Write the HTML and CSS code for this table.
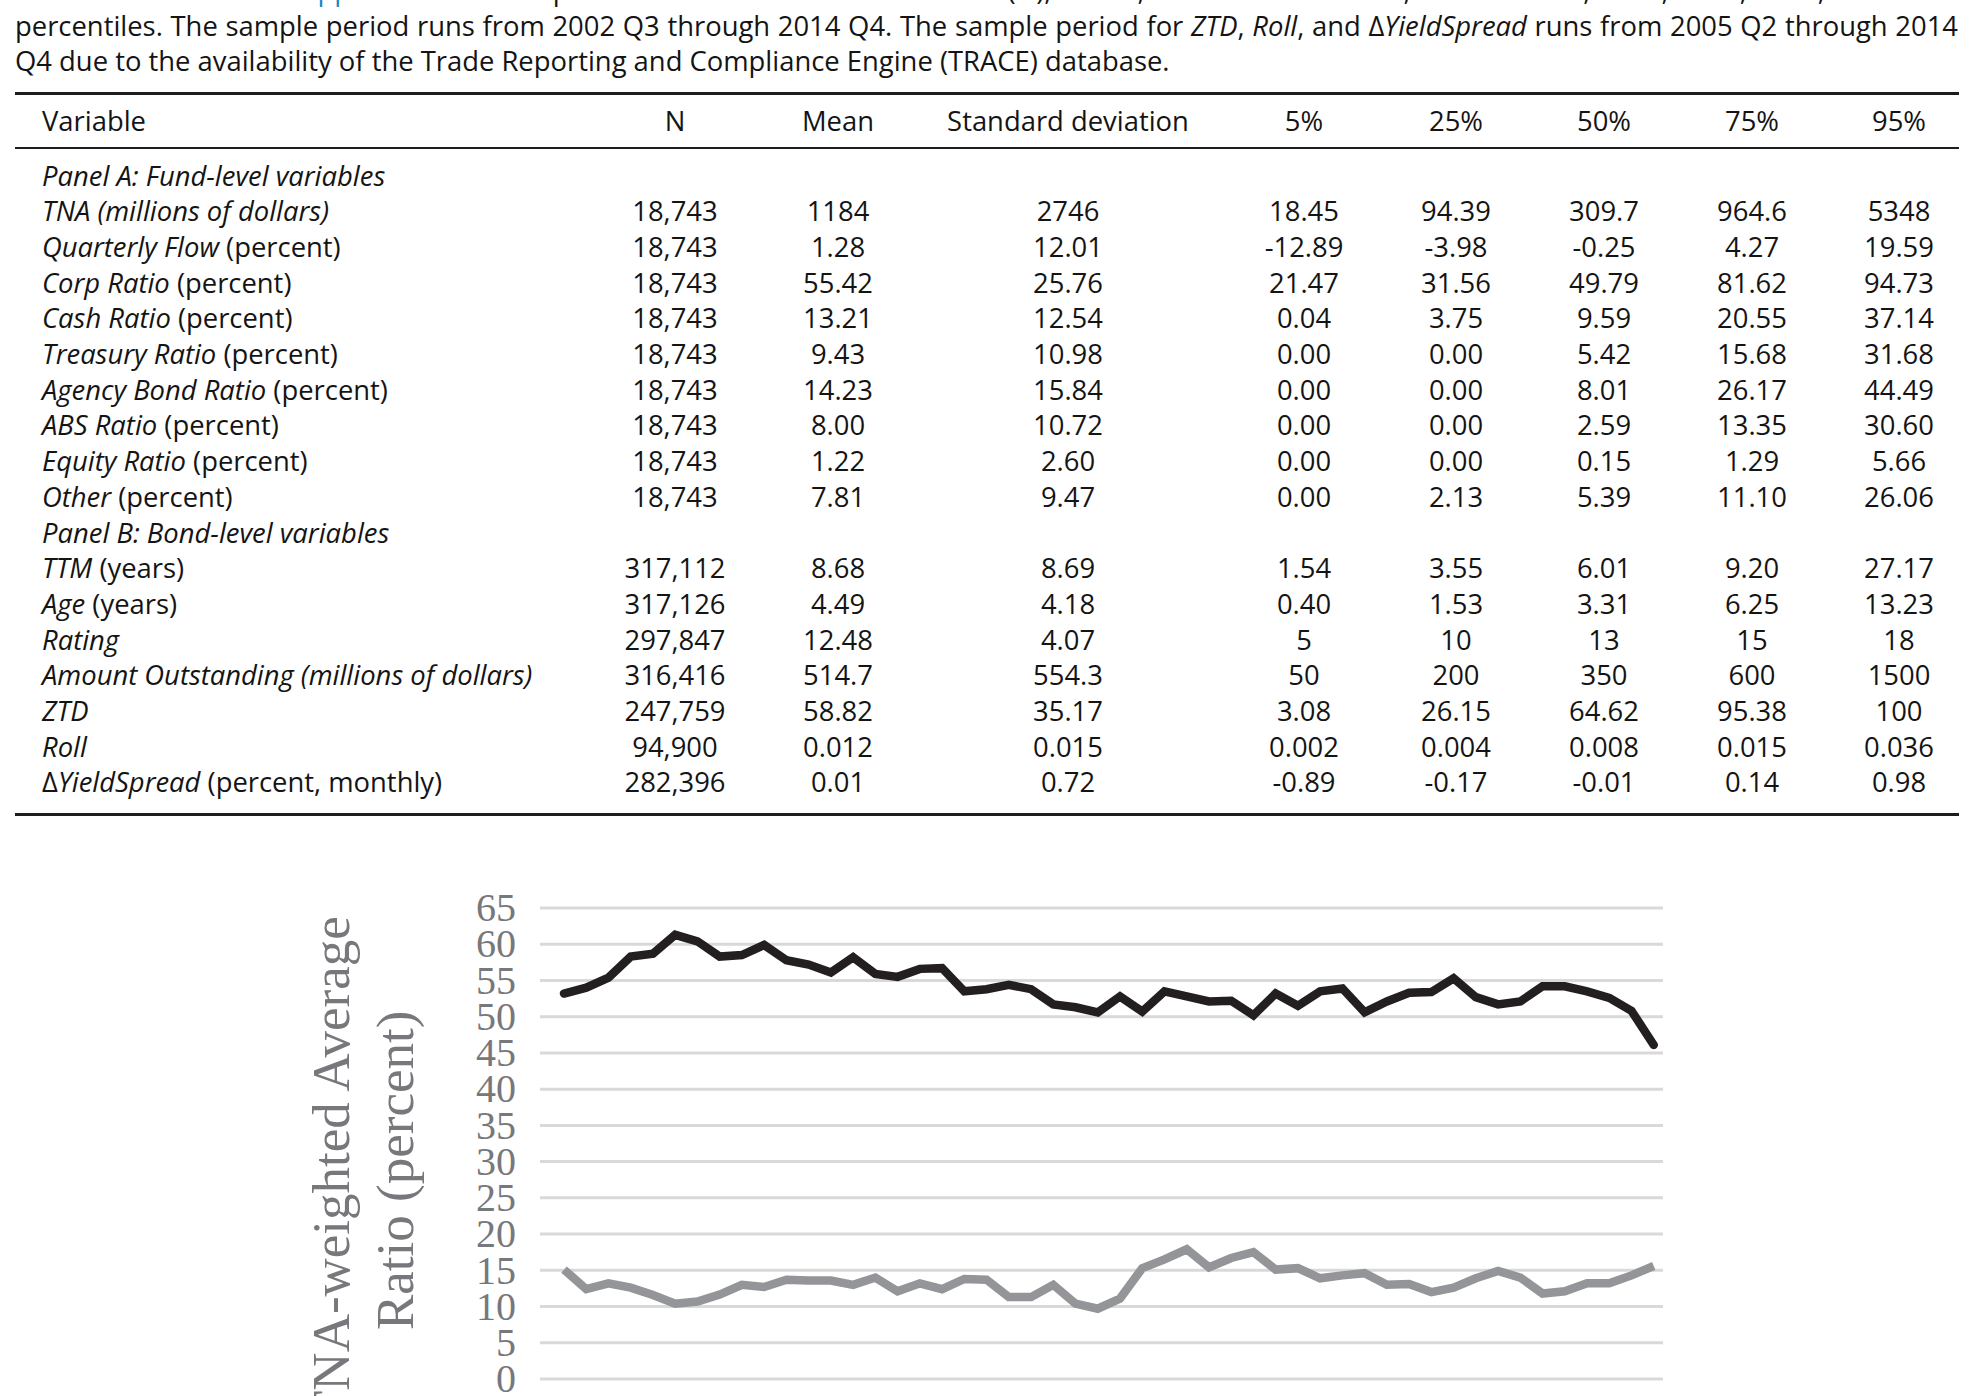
FILE: index.html
```html
<!DOCTYPE html>
<html lang="en">
<head>
    <meta charset="UTF-8">
    <title>Summary statistics</title>
    <link rel="stylesheet" href="styles.css">
</head>
<body>
    <div class="note">
        <div class="line full">variables. Defined in <a href="#">Appendix A</a>. We report the number of observations (N), mean, standard deviation, and the 5th, 25th, 50th, 75th, and 95th</div>
        <div class="line full">percentiles. The sample period runs from 2002 Q3 through 2014 Q4. The sample period for <i>ZTD</i>, <i>Roll</i>, and Δ<i>YieldSpread</i> runs from 2005 Q2 through 2014</div>
        <div class="line">Q4 due to the availability of the Trade Reporting and Compliance Engine (TRACE) database.</div>
    </div>

    <table class="stats">
        <colgroup>
            <col class="c-var">
            <col class="c-n">
            <col class="c-mean">
            <col class="c-sd">
            <col class="c-p5">
            <col class="c-p25">
            <col class="c-p50">
            <col class="c-p75">
            <col class="c-p95">
        </colgroup>
        <thead>
            <tr>
                <th class="label">Variable</th>
                <th>N</th>
                <th>Mean</th>
                <th>Standard deviation</th>
                <th>5%</th>
                <th>25%</th>
                <th>50%</th>
                <th>75%</th>
                <th>95%</th>
            </tr>
        </thead>
        <tbody>
            <tr class="panel"><td class="label"><i>Panel A: Fund-level variables</i></td><td colspan="8"></td></tr>
            <tr><td class="label"><i>TNA (millions of dollars)</i></td><td>18,743</td><td>1184</td><td>2746</td><td>18.45</td><td>94.39</td><td>309.7</td><td>964.6</td><td>5348</td></tr>
            <tr><td class="label"><i>Quarterly Flow</i> (percent)</td><td>18,743</td><td>1.28</td><td>12.01</td><td>-12.89</td><td>-3.98</td><td>-0.25</td><td>4.27</td><td>19.59</td></tr>
            <tr><td class="label"><i>Corp Ratio</i> (percent)</td><td>18,743</td><td>55.42</td><td>25.76</td><td>21.47</td><td>31.56</td><td>49.79</td><td>81.62</td><td>94.73</td></tr>
            <tr><td class="label"><i>Cash Ratio</i> (percent)</td><td>18,743</td><td>13.21</td><td>12.54</td><td>0.04</td><td>3.75</td><td>9.59</td><td>20.55</td><td>37.14</td></tr>
            <tr><td class="label"><i>Treasury Ratio</i> (percent)</td><td>18,743</td><td>9.43</td><td>10.98</td><td>0.00</td><td>0.00</td><td>5.42</td><td>15.68</td><td>31.68</td></tr>
            <tr><td class="label"><i>Agency Bond Ratio</i> (percent)</td><td>18,743</td><td>14.23</td><td>15.84</td><td>0.00</td><td>0.00</td><td>8.01</td><td>26.17</td><td>44.49</td></tr>
            <tr><td class="label"><i>ABS Ratio</i> (percent)</td><td>18,743</td><td>8.00</td><td>10.72</td><td>0.00</td><td>0.00</td><td>2.59</td><td>13.35</td><td>30.60</td></tr>
            <tr><td class="label"><i>Equity Ratio</i> (percent)</td><td>18,743</td><td>1.22</td><td>2.60</td><td>0.00</td><td>0.00</td><td>0.15</td><td>1.29</td><td>5.66</td></tr>
            <tr><td class="label"><i>Other</i> (percent)</td><td>18,743</td><td>7.81</td><td>9.47</td><td>0.00</td><td>2.13</td><td>5.39</td><td>11.10</td><td>26.06</td></tr>
            <tr class="panel"><td class="label"><i>Panel B: Bond-level variables</i></td><td colspan="8"></td></tr>
            <tr><td class="label"><i>TTM</i> (years)</td><td>317,112</td><td>8.68</td><td>8.69</td><td>1.54</td><td>3.55</td><td>6.01</td><td>9.20</td><td>27.17</td></tr>
            <tr><td class="label"><i>Age</i> (years)</td><td>317,126</td><td>4.49</td><td>4.18</td><td>0.40</td><td>1.53</td><td>3.31</td><td>6.25</td><td>13.23</td></tr>
            <tr><td class="label"><i>Rating</i></td><td>297,847</td><td>12.48</td><td>4.07</td><td>5</td><td>10</td><td>13</td><td>15</td><td>18</td></tr>
            <tr><td class="label"><i>Amount Outstanding (millions of dollars)</i></td><td>316,416</td><td>514.7</td><td>554.3</td><td>50</td><td>200</td><td>350</td><td>600</td><td>1500</td></tr>
            <tr><td class="label"><i>ZTD</i></td><td>247,759</td><td>58.82</td><td>35.17</td><td>3.08</td><td>26.15</td><td>64.62</td><td>95.38</td><td>100</td></tr>
            <tr><td class="label"><i>Roll</i></td><td>94,900</td><td>0.012</td><td>0.015</td><td>0.002</td><td>0.004</td><td>0.008</td><td>0.015</td><td>0.036</td></tr>
            <tr><td class="label">Δ<i>YieldSpread</i> (percent, monthly)</td><td>282,396</td><td>0.01</td><td>0.72</td><td>-0.89</td><td>-0.17</td><td>-0.01</td><td>0.14</td><td>0.98</td></tr>
        </tbody>
    </table>

    <div class="chart">
        <div class="axis-title">TNA-weighted Average<br>Ratio (percent)</div>
        <div class="ticks">
            <span>65</span><span>60</span><span>55</span><span>50</span><span>45</span>
            <span>40</span><span>35</span><span>30</span><span>25</span><span>20</span>
            <span>15</span><span>10</span><span>5</span><span>0</span>
        </div>
        <svg class="plot" width="1123" height="471" viewBox="0 0 1123 471">
            <g class="grid">
                <line x1="0" x2="1123" y1="0" y2="0"/>
                <line x1="0" x2="1123" y1="36.23" y2="36.23"/>
                <line x1="0" x2="1123" y1="72.46" y2="72.46"/>
                <line x1="0" x2="1123" y1="108.69" y2="108.69"/>
                <line x1="0" x2="1123" y1="144.92" y2="144.92"/>
                <line x1="0" x2="1123" y1="181.15" y2="181.15"/>
                <line x1="0" x2="1123" y1="217.38" y2="217.38"/>
                <line x1="0" x2="1123" y1="253.62" y2="253.62"/>
                <line x1="0" x2="1123" y1="289.85" y2="289.85"/>
                <line x1="0" x2="1123" y1="326.08" y2="326.08"/>
                <line x1="0" x2="1123" y1="362.31" y2="362.31"/>
                <line x1="0" x2="1123" y1="398.54" y2="398.54"/>
                <line x1="0" x2="1123" y1="434.77" y2="434.77"/>
                <line x1="0" x2="1123" y1="471" y2="471"/>
            </g>
            <!-- x = quarter index, y = percent -->
            <g transform="translate(24 471) scale(22.24 -7.246)">
                <polyline class="series corp" points="0,53.2 1,54.0 2,55.4 3,58.3 4,58.7 5,61.3 6,60.4 7,58.3 8,58.5 9,59.9 10,57.8 11,57.2 12,56.1 13,58.2 14,55.9 15,55.5 16,56.6 17,56.7 18,53.5 19,53.8 20,54.4 21,53.8 22,51.7 23,51.3 24,50.6 25,52.8 26,50.7 27,53.5 28,52.8 29,52.1 30,52.2 31,50.2 32,53.2 33,51.5 34,53.5 35,53.9 36,50.6 37,52.1 38,53.3 39,53.4 40,55.3 41,52.7 42,51.7 43,52.1 44,54.2 45,54.2 46,53.5 47,52.6 48,50.8 49,46.1"/>
                <polyline class="series other" points="0,15.1 1,12.4 2,13.2 3,12.6 4,11.6 5,10.4 6,10.7 7,11.65 8,13.0 9,12.7 10,13.7 11,13.6 12,13.6 13,13.0 14,14.0 15,12.1 16,13.2 17,12.4 18,13.8 19,13.7 20,11.3 21,11.3 22,13.0 23,10.4 24,9.7 25,11.1 26,15.3 27,16.5 28,17.9 29,15.4 30,16.7 31,17.5 32,15.1 33,15.3 34,13.9 35,14.3 36,14.6 37,13.0 38,13.1 39,12.0 40,12.6 41,13.9 42,14.9 43,14.0 44,11.8 45,12.1 46,13.2 47,13.2 48,14.3 49,15.6"/>
            </g>
        </svg>
    </div>
</body>
</html>
```

FILE: styles.css
```css
html, body {
    margin: 0;
    padding: 0;
    background: #fff;
    overflow: hidden;
}

body {
    width: 1979px;
    height: 1396px;
    color: #141414;
    font-family: "Open Sans", "DejaVu Sans", sans-serif;
    font-size: 27.4px;
}

/* table note above the table */
.note {
    margin-top: -28px;
    padding: 0 21px 0 15px;
    line-height: 35.5px;
}

.line {
    white-space: nowrap;
}

.line.full {
    text-align: justify;
    text-align-last: justify;
}

.note a {
    color: #1b86c4;
    text-decoration: none;
}

/* statistics table */
.stats {
    margin: 13px 0 0 15px;
    width: 1944px;
    border-collapse: collapse;
    table-layout: fixed;
}

.c-var { width: 556px; }
.c-n { width: 208px; }
.c-mean { width: 118px; }
.c-sd { width: 342px; }
.c-p5 { width: 130px; }
.c-p25 { width: 174px; }
.c-p50 { width: 122px; }
.c-p75 { width: 174px; }
.c-p95 { width: 120px; }

.stats th {
    font-weight: normal;
    height: 52px;
    padding: 0;
    border-top: 3px solid #1d1d1b;
    border-bottom: 2px solid #1d1d1b;
    text-align: center;
    white-space: nowrap;
}

.stats td {
    padding: 0;
    line-height: 35.7px;
    text-align: center;
    white-space: nowrap;
}

.stats .label {
    text-align: left;
    padding-left: 27px;
}

.stats tbody tr:first-child td {
    padding-top: 9px;
}

.stats tbody tr:last-child td {
    padding-bottom: 13px;
    border-bottom: 3px solid #1d1d1b;
}

/* chart */
.chart {
    display: flex;
    align-items: flex-start;
    height: 560px;
    margin-top: 74px;
    padding-left: 299px;
    font-family: "Liberation Serif", serif;
    color: #77787b;
}

.axis-title {
    writing-mode: vertical-rl;
    transform: rotate(180deg);
    width: 128px;
    height: 560px;
    font-size: 53px;
    line-height: 64px;
    text-align: center;
    white-space: nowrap;
}

.ticks {
    display: flex;
    flex-direction: column;
    width: 89px;
    font-size: 40px;
    line-height: 36.23px;
    text-align: right;
}

.plot {
    margin: 18px 0 0 24px;
    overflow: visible;
}

.grid line {
    stroke: #d9d9d9;
    stroke-width: 3;
}

.series {
    fill: none;
    stroke-width: 8.5;
    stroke-linejoin: miter;
    vector-effect: non-scaling-stroke;
}

.series.corp {
    stroke: #231f20;
    stroke-linecap: round;
}

.series.other {
    stroke: #939598;
    stroke-linecap: butt;
}
```
